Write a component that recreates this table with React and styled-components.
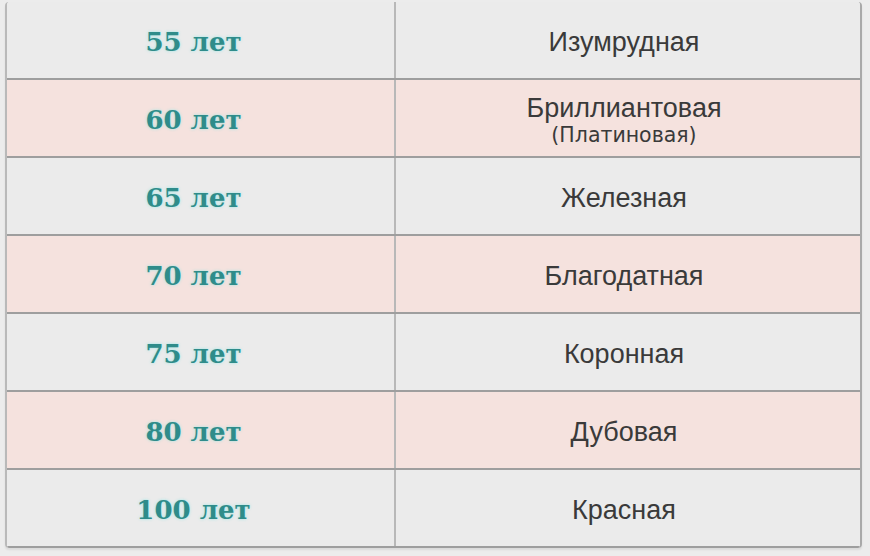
import React from "react";
import styled, { createGlobalStyle } from "styled-components";

const Global = createGlobalStyle`
  html, body { margin: 0; padding: 0; background: #ececec; }
  body { width: 870px; height: 556px; overflow: hidden; }
`;

const Table = styled.div`
  margin: 2px 8px 0 5px;
  display: flex;
  flex-direction: column;
  border-left: 2px solid #b9b9b9;
  border-right: 2px solid #a9a9a9;
  border-radius: 4px;
  overflow: hidden;
  box-shadow: 0 2px 2px rgba(0,0,0,0.08);
`;

const Row = styled.div`
  display: grid;
  grid-template-columns: 389px 1fr;
  height: 76px;
  background: ${p => (p.$pink ? "#f5e2de" : "#ebebeb")};
  border-bottom: 2px solid #9e9e9e;
`;

const Years = styled.div`
  display: flex;
  align-items: center;
  justify-content: center;
  border-right: 2px solid #b8b8b8;
  font-family: "DejaVu Serif", "Liberation Serif", serif;
  font-weight: bold;
  font-size: 26px;
  color: #2f8c8a;
  text-shadow: 0 0 3px rgba(140, 230, 230, 0.9);
  padding: 4px 14px 0 0;
`;

const Name = styled.div`
  display: flex;
  flex-direction: column;
  align-items: center;
  justify-content: center;
  font-family: "Liberation Sans", Arial, sans-serif;
  font-size: 27px;
  color: #3a3a3a;
  line-height: 1;
  padding: 4px 8px 0 0;
`;

const Sub = styled.span`
  font-family: "DejaVu Sans", sans-serif;
  font-size: 20.5px;
  margin-top: 3px;
`;

const rows = [
  ["55 лет", "Изумрудная"],
  ["60 лет", "Бриллиантовая", "(Платиновая)"],
  ["65 лет", "Железная"],
  ["70 лет", "Благодатная"],
  ["75 лет", "Коронная"],
  ["80 лет", "Дубовая"],
  ["100 лет", "Красная"],
];

export default function App() {
  return (
    <>
      <Global />
      <Table>
        {rows.map(([y, n, s], i) => (
          <Row key={y} $pink={i % 2 === 1}>
            <Years>{y}</Years>
            <Name>
              <span>{n}</span>
              {s && <Sub>{s}</Sub>}
            </Name>
          </Row>
        ))}
      </Table>
    </>
  );
}
